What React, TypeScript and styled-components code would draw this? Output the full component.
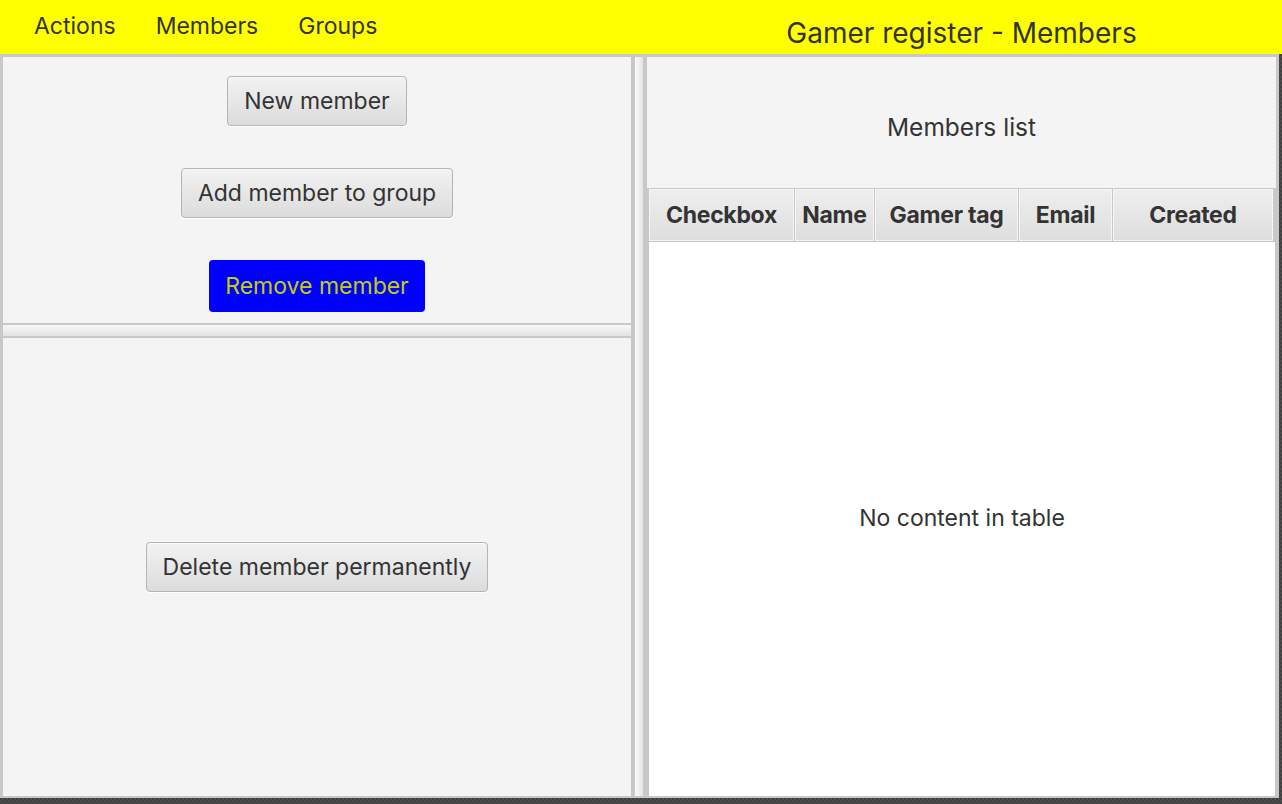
import React from "react";
import styled, { createGlobalStyle } from "styled-components";

const columns = [
  { title: "Checkbox", width: 145 },
  { title: "Name", width: 79 },
  { title: "Gamer tag", width: 143 },
  { title: "Email", width: 93 },
  { title: "Created", width: 160 },
];

const menuItems = ["Actions", "Members", "Groups"];

export default function App() {
  return (
    <>
      <GlobalStyle />
      <Frame>
        <Window>
          <TopBar>
            <MenuBar>
              {menuItems.map((item) => (
                <MenuItem key={item}>{item}</MenuItem>
              ))}
            </MenuBar>
            <Title>Gamer register - Members</Title>
          </TopBar>
          <Main>
            <LeftPane>
              <ActionSection>
                <Button>New member</Button>
                <Button>Add member to group</Button>
                <Button $danger>Remove member</Button>
              </ActionSection>
              <HDivider />
              <DeleteSection>
                <Button>Delete member permanently</Button>
              </DeleteSection>
            </LeftPane>
            <VDivider />
            <RightPane>
              <Heading>Members list</Heading>
              <Table>
                <HeaderRow>
                  {columns.map((col) => (
                    <HeaderCell key={col.title} $width={col.width}>
                      {col.title}
                    </HeaderCell>
                  ))}
                  <HeaderFiller />
                </HeaderRow>
                <TableBody>No content in table</TableBody>
              </Table>
            </RightPane>
          </Main>
        </Window>
      </Frame>
    </>
  );
}

const GlobalStyle = createGlobalStyle`
  html, body {
    margin: 0;
    padding: 0;
    background: #464646;
  }

  body {
    font-family: Inter, "Noto Sans", sans-serif;
    color: #333;
  }

  * {
    box-sizing: border-box;
  }
`;

const Frame = styled.div`
  width: 1282px;
  height: 804px;
  overflow: hidden;
  background: repeating-conic-gradient(#404040 0% 25%, #4c4c4c 0% 50%) 0 0 / 4px 4px;
`;

const Window = styled.div`
  width: 1279px;
  height: 798px;
  display: flex;
  flex-direction: column;
  background: #c8c8c8;
`;

const TopBar = styled.div`
  height: 54px;
  width: 1282px;
  flex-shrink: 0;
  display: flex;
  background: #ffff00;
`;

const MenuBar = styled.div`
  width: 647px;
  display: flex;
  align-items: center;
  padding: 0 0 2px 14px;
`;

const MenuItem = styled.div`
  padding: 0 20px;
  font-size: 23px;
  color: #333;
`;

const Title = styled.div`
  flex: 1;
  display: flex;
  justify-content: center;
  align-items: center;
  padding: 12px 6px 0 0;
  font-size: 28px;
  color: #333;
`;

const Main = styled.div`
  flex: 1;
  display: flex;
  padding: 3px 3px 2px 3px;
  min-height: 0;
`;

const LeftPane = styled.div`
  width: 628px;
  flex-shrink: 0;
  display: flex;
  flex-direction: column;
`;

const ActionSection = styled.div`
  height: 266px;
  display: flex;
  flex-direction: column;
  align-items: center;
  gap: 42px;
  padding-top: 19px;
  background: #f4f4f4;
`;

const HDivider = styled.div`
  height: 11px;
  margin: 2px 0;
  background: linear-gradient(#f8f8f8, #e2e2e2);
`;

const DeleteSection = styled.div`
  flex: 1;
  display: flex;
  align-items: center;
  justify-content: center;
  background: #f4f4f4;
`;

const VDivider = styled.div`
  width: 8px;
  flex-shrink: 0;
  margin: 0 4px;
  background: linear-gradient(to right, #fafafa, #e4e4e4);
`;

const RightPane = styled.div`
  flex: 1;
  min-width: 0;
  display: flex;
  flex-direction: column;
  background: #f4f4f4;
`;

const Heading = styled.div`
  height: 131px;
  display: flex;
  align-items: center;
  justify-content: center;
  padding-top: 8px;
  font-size: 24.5px;
  color: #333;
`;

const Table = styled.div`
  flex: 1;
  display: flex;
  flex-direction: column;
  background: #c8c8c8;
  padding: 1px 1px 0 2px;
`;

const HeaderRow = styled.div`
  height: 52px;
  display: flex;
  gap: 1px;
`;

const HeaderCell = styled.div<{ $width: number }>`
  width: ${(p) => p.$width}px;
  flex-shrink: 0;
  display: flex;
  align-items: center;
  justify-content: center;
  border: 1px solid #f6f6f6;
  background: linear-gradient(#eeeeee, #dedede);
  font-size: 23px;
  font-weight: 700;
  letter-spacing: -0.3px;
  color: #333;
`;

const HeaderFiller = styled.div`
  flex: 1;
`;

const TableBody = styled.div`
  flex: 1;
  margin-top: 1px;
  display: flex;
  align-items: center;
  justify-content: center;
  padding-bottom: 2px;
  background: #fff;
  font-size: 23px;
  color: #333;
`;

const Button = styled.button<{ $danger?: boolean }>`
  height: ${(p) => (p.$danger ? 52 : 50)}px;
  padding: 0 16px;
  font-family: Inter, "Noto Sans", sans-serif;
  font-size: 23px;
  border-radius: 4px;
  cursor: pointer;
  color: ${(p) => (p.$danger ? "#c4d000" : "#333")};
  border: ${(p) => (p.$danger ? "none" : "1.5px solid #b4b4b4")};
  background: ${(p) =>
    p.$danger ? "#0000ff" : "linear-gradient(#f2f2f2, #dcdcdc)"};
  box-shadow: ${(p) =>
    p.$danger ? "none" : "inset 0 1px 0 #fafafa, 0 1px 0 #ffffff"};
`;
